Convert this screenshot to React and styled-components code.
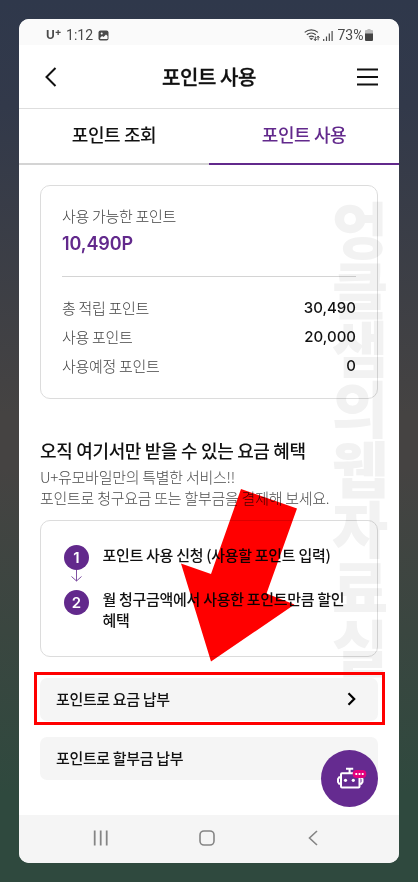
import styled, { createGlobalStyle } from "styled-components";

const GlobalStyle = createGlobalStyle`
  * {
    box-sizing: border-box;
  }
  body {
    margin: 0;
    font-family: "Noto Sans CJK KR", sans-serif;
    color: #111;
  }
  p, h1, h2 {
    margin: 0;
  }
`;

const Page = styled.div`
  width: 418px;
  height: 882px;
  padding: 19px;
  background: linear-gradient(180deg, #2f384b 0%, #32394a 12%, #454342 47%, #454342 53%, #2f493e 90%, #2f493e 100%);
`;

const Phone = styled.div`
  position: relative;
  display: flex;
  flex-direction: column;
  width: 380px;
  height: 844px;
  border-radius: 10px;
  overflow: hidden;
  background: #fff;
`;

const StatusBar = styled.div`
  display: flex;
  justify-content: space-between;
  align-items: center;
  height: 26px;
  padding: 6px 26px 0 27px;
  background: #fafafa;
  color: #4a4a4a;
  font: 400 14px/18px Roboto, sans-serif;
`;

const StatusGroup = styled.div`
  display: flex;
  align-items: center;
  gap: ${(props) => props.$gap}px;
`;

const Carrier = styled.span`
  font: 700 12px/18px Inter, sans-serif;

  sup {
    font-size: 10px;
    line-height: 0;
    vertical-align: 4px;
  }
`;

const Header = styled.header`
  display: flex;
  justify-content: space-between;
  align-items: center;
  height: 64px;
  padding: 0 21px 0 26px;
  border-bottom: 1px solid #dedede;
`;

const Title = styled.h1`
  padding-left: 4px;
  font-size: 20px;
  line-height: 28px;
  font-weight: 500;
  letter-spacing: -0.4px;
  -webkit-text-stroke: 0.3px #111;
`;

const Tabs = styled.nav`
  display: flex;
  height: 56px;
`;

const Tab = styled.div`
  flex: 1;
  border-bottom: 2px solid ${(props) => (props.$active ? "#62298c" : "#d4d4d4")};
  color: ${(props) => (props.$active ? "#62298c" : "#111")};
  font-size: 18px;
  line-height: 50px;
  font-weight: 500;
  letter-spacing: -0.4px;
  text-align: center;
`;

const Content = styled.main`
  flex: 1;
  padding: 20px 21px 0;
`;

const PointCard = styled.section`
  height: 214px;
  padding: 17px 21px 0;
  border: 1px solid #dcdcdc;
  border-radius: 10px;
`;

const Label = styled.span`
  color: #444;
  font-size: 15px;
  line-height: 22px;
  font-weight: 300;
  letter-spacing: -0.3px;
`;

const Balance = styled.p`
  margin-top: 4px;
  padding-bottom: 19px;
  border-bottom: 1px solid #d4d4d4;
  color: #62298c;
  font: 600 18px/26px Inter, sans-serif;
  letter-spacing: -0.1px;
`;

const PointRow = styled.div`
  display: flex;
  justify-content: space-between;
  align-items: center;
  height: 29px;

  &:first-of-type {
    margin-top: 16px;
  }
`;

const Amount = styled.span`
  font: 500 15px/22px Inter, sans-serif;
`;

const SectionTitle = styled.h2`
  margin-top: 37px;
  padding-bottom: 2px;
  font-size: 18px;
  line-height: 28px;
  font-weight: 500;
  letter-spacing: -0.33px;
  white-space: nowrap;
`;

const Description = styled.p`
  color: #4c4c4c;
  font-size: 15px;
  line-height: 21px;
  font-weight: 300;
  letter-spacing: -0.27px;
  white-space: nowrap;
`;

const StepCard = styled.section`
  display: flex;
  gap: 13.500px;
  height: 137px;
  margin-top: 12px;
  padding: 24px 10px 0 23px;
  border: 1px solid #dcdcdc;
  border-radius: 10px;
`;

const StepMarks = styled.div`
  display: flex;
  flex-direction: column;
  align-items: center;
`;

const StepNumber = styled.span`
  width: 25px;
  height: 25px;
  border-radius: 50%;
  background: #62298c;
  color: #fff;
  font: 600 15px/25px Inter, sans-serif;
  text-align: center;
`;

const StepTexts = styled.div`
  display: flex;
  flex-direction: column;
  gap: 23px;
  margin-top: -1px;
  font-size: 15px;
  line-height: 21px;
  font-weight: 500;
  letter-spacing: -0.3px;
  white-space: nowrap;
`;

const PayButton = styled.button`
  display: flex;
  justify-content: space-between;
  align-items: center;
  width: 100%;
  height: 43px;
  margin-top: ${(props) => props.$gap}px;
  padding: 0 22px 2px 16px;
  border: 0;
  border-radius: 7px;
  background: #f5f5f5;
  color: #111;
  font: 500 15px/22px "Noto Sans CJK KR", sans-serif;
  letter-spacing: -0.35px;
`;

const NavBar = styled.footer`
  display: flex;
  justify-content: space-between;
  align-items: center;
  height: 48px;
  padding: 0 81px 2px 74px;
  background: #f5f5f5;
`;

const Watermark = styled.div`
  position: absolute;
  top: 179px;
  left: 311px;
  width: 60px;
  color: #f2f2f2;
  font-size: 61px;
  line-height: 59.700px;
  font-weight: 900;
  text-align: center;
  mix-blend-mode: multiply;
  pointer-events: none;

  span {
    display: block;
  }
`;

const Arrow = styled.svg`
  position: absolute;
  top: 470px;
  left: 161px;
  mix-blend-mode: multiply;
`;

const Highlight = styled.div`
  position: absolute;
  top: 653px;
  left: 15px;
  width: 351px;
  height: 53px;
  border: 3px solid #f00;
`;

const ChatButton = styled.div`
  position: absolute;
  top: 731px;
  left: 302px;
  display: flex;
  width: 57px;
  height: 57px;
  border-radius: 50%;
  background: #652b90;
`;

const points = [
  ["총 적립 포인트", "30,490"],
  ["사용 포인트", "20,000"],
  ["사용예정 포인트", "0"],
];

function StatusIcons() {
  return (
    <svg width="29" height="15" viewBox="0 0 29 15" fill="none" stroke="#4a4a4a">
      <path d="M.7 4.4a10 10 0 0 1 13.2 0M2.8 6.8a7 7 0 0 1 9 0M4.9 9.1a4 4 0 0 1 5-.1" strokeWidth="1.2" />
      <path d="M5.8 10.3h3L7.3 12z" fill="#4a4a4a" strokeWidth=".5" />
      <path d="M11.3 8.5v4M9.9 11l1.4 1.6 1.3-1.6M14.1 12.3v-4M12.8 9.7l1.3-1.6 1.3 1.6" strokeWidth="1" />
      <path d="M19.7 11v2M22.5 8.5V13M25.3 5.5V13M28.1 3v10" strokeWidth="1.2" />
    </svg>
  );
}

function RobotIcon() {
  return (
    <svg width="57" height="57" viewBox="0 0 57 57" fill="none" stroke="#fff" strokeWidth="2">
      <path d="M25 18.700h7.200M28.600 19v4" />
      <rect x="20" y="23.300" width="18.500" height="14.200" rx="1" />
      <path d="M19.500 27.300h-1.300L17 29v3l1.200 1.800h1.300M39 27.300h1.300L41.500 29v3l-1.200 1.800H39" />
      <circle cx="24.500" cy="30.300" r="1.600" fill="#fff" stroke="none" />
      <circle cx="32.300" cy="30.300" r="1.600" fill="#fff" stroke="none" />
      <rect x="31.700" y="20" width="13.600" height="8" rx="3.800" fill="#e5007d" stroke="none" />
      <path d="M34.400 24h1.800M37.600 24h1.800M40.800 24h1.800" strokeWidth="1.800" />
    </svg>
  );
}

export default function App() {
  return (
    <>
      <GlobalStyle />
      <Page>
        <Phone>
          <StatusBar>
            <StatusGroup $gap={4.5}>
              <Carrier>U<sup>+</sup></Carrier>
              <span>1:12</span>
              <svg width="11" height="11" viewBox="0 0 11 11">
                <rect x=".5" y=".5" width="10" height="10" rx="2" fill="#4a4a4a" />
                <path d="M2 8l2-2 1.500 1L8 4.500 9.500 6v3h-7z" fill="#fafafa" />
                <circle cx="3.700" cy="3.400" r="1" fill="#fafafa" />
              </svg>
            </StatusGroup>
            <StatusGroup $gap={5}>
              <StatusIcons />
              <StatusGroup $gap={1.5}>
                <span>73%</span>
                <svg width="8" height="12" viewBox="0 0 8 12">
                  <path d="M2.500 0h3v1H7a1 1 0 0 1 1 1v3H0V2a1 1 0 0 1 1-1h1.500z" fill="#bbb" />
                  <path d="M0 4.500h8V11a1 1 0 0 1-1 1H1a1 1 0 0 1-1-1z" fill="#444" />
                </svg>
              </StatusGroup>
            </StatusGroup>
          </StatusBar>
          <Header>
            <svg width="12" height="20" viewBox="0 0 12 20" fill="none" stroke="#111" strokeWidth="2">
              <path d="M10.500 1L1.500 10l9 9" />
            </svg>
            <Title>포인트 사용</Title>
            <svg width="21" height="18" viewBox="0 0 21 18" stroke="#111" strokeWidth="2">
              <path d="M0 1.500h21M0 9h21M0 16.500h21" />
            </svg>
          </Header>
          <Tabs>
            <Tab>포인트 조회</Tab>
            <Tab $active>포인트 사용</Tab>
          </Tabs>
          <Content>
            <PointCard>
              <Label>사용 가능한 포인트</Label>
              <Balance>10,490P</Balance>
              {points.map(([name, value]) => (
                <PointRow key={name}>
                  <Label>{name}</Label>
                  <Amount>{value}</Amount>
                </PointRow>
              ))}
            </PointCard>
            <SectionTitle>오직 여기서만 받을 수 있는 요금 혜택</SectionTitle>
            <Description>
              U+유모바일만의 특별한 서비스!!
              <br />
              포인트로 청구요금 또는 할부금을 결제해 보세요.
            </Description>
            <StepCard>
              <StepMarks>
                <StepNumber>1</StepNumber>
                <svg width="13" height="20" viewBox="0 0 13 20" fill="none" stroke="#8051a3">
                  <path d="M6.500 0v11M1.500 6.500l5 4.500 5-4.500" />
                </svg>
                <StepNumber>2</StepNumber>
              </StepMarks>
              <StepTexts>
                <p>포인트 사용 신청 (사용할 포인트 입력)</p>
                <p>
                  월 청구금액에서 사용한 포인트만큼 할인
                  <br />
                  혜택
                </p>
              </StepTexts>
            </StepCard>
            <PayButton $gap={21}>
              포인트로 요금 납부
              <svg width="9" height="14" viewBox="0 0 9 14" fill="none" stroke="#000" strokeWidth="2.200">
                <path d="M1.500 1.300L7.200 7l-5.700 5.700" />
              </svg>
            </PayButton>
            <PayButton $gap={16}>포인트로 할부금 납부</PayButton>
          </Content>
          <NavBar>
            <svg width="16" height="16" viewBox="0 0 16 16" stroke="#858585" strokeWidth="1.800">
              <path d="M1.700 .5v15M7.700 .5v15M13.700 .5v15" />
            </svg>
            <svg width="20" height="16" viewBox="0 0 20 16" fill="none" stroke="#858585" strokeWidth="1.600">
              <rect x="1" y="1" width="14" height="14" rx="4" />
            </svg>
            <svg width="10" height="16" viewBox="0 0 10 16" fill="none" stroke="#858585" strokeWidth="1.600">
              <path d="M9 1L1.500 8 9 15" />
            </svg>
          </NavBar>

          <Watermark>
            {[..."엉클샘의웹자료실"].map((letter) => (
              <span key={letter}>{letter}</span>
            ))}
          </Watermark>
          <Arrow width="120" height="175" viewBox="0 0 120 175" fill="#f00">
            <path d="M61 0l56 19.500-30.500 85 28 11L31 172.500 1 74.500l30 10.500z" />
          </Arrow>
          <Highlight />
          <ChatButton>
            <RobotIcon />
          </ChatButton>
        </Phone>
      </Page>
    </>
  );
}
